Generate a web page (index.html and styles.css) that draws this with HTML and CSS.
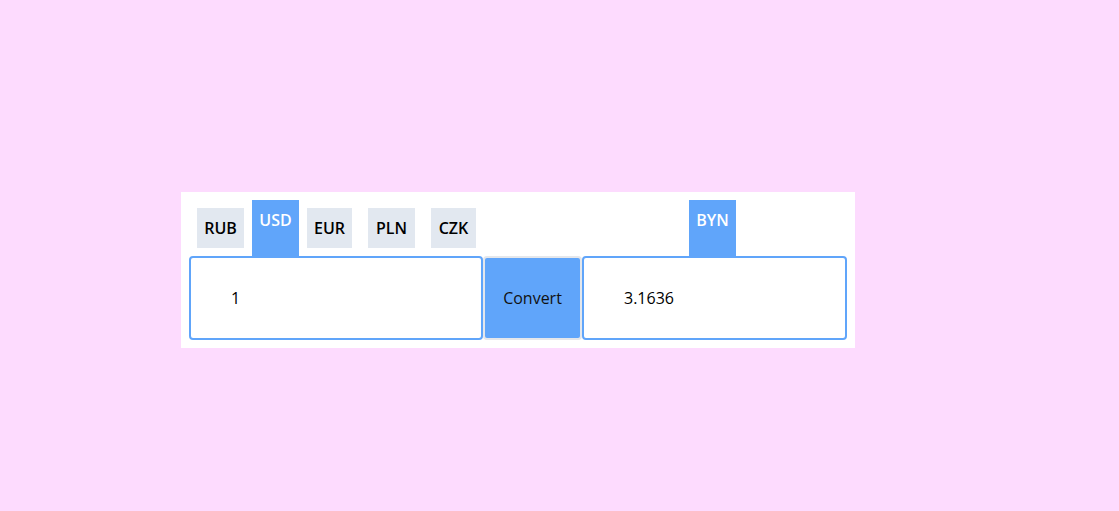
FILE: index.html
```html
<!DOCTYPE html>
<html lang="en">
<head>
<meta charset="utf-8">
<title>Currency converter</title>
<link rel="stylesheet" href="styles.css">
</head>
<body>
<div class="app">
  <div class="block block-in">
    <ul class="tabs">
      <li class="tab">RUB</li>
      <li class="tab active">USD</li>
      <li class="tab narrow">EUR</li>
      <li class="tab wide-gap">PLN</li>
      <li class="tab narrow wide-gap">CZK</li>
    </ul>
    <input class="field" type="text" value="1">
  </div>
  <button class="convert">Convert</button>
  <div class="block block-out">
    <ul class="tabs tabs-out">
      <li class="tab active">BYN</li>
    </ul>
    <input class="field" type="text" value="3.1636">
  </div>
</div>
</body>
</html>
```

FILE: styles.css
```css
* { box-sizing: border-box; }

html, body {
  margin: 0;
  padding: 0;
  background: #fddbfe;
  font-family: "Open Sans", "Noto Sans", sans-serif;
}

body {
  padding: 192px 0 0 181px;
}

.app {
  display: inline-flex;
  align-items: flex-end;
  background: #ffffff;
  padding: 8px;
}

.block {
  display: flex;
  flex-direction: column;
}

.block-in { width: 294px; }
.block-out { width: 265px; }

.tabs {
  list-style: none;
  margin: 0;
  padding: 0 0 0 8px;
  height: 56px;
  display: flex;
  align-items: center;
  gap: 8px;
}

.tabs-out {
  padding-left: 107px;
}

.tab {
  width: 47px;
  height: 40px;
  padding-top: 10px;
  line-height: 20px;
  text-align: center;
  font-size: 16px;
  font-weight: 600;
  color: #000;
  background: #e2e8f0;
  cursor: pointer;
}

.tab.narrow {
  width: 45px;
}

.tab.wide-gap {
  margin-left: 8px;
}

.tab.active {
  width: 47px;
  height: 56px;
  background: #60a5fa;
  color: #fff;
  font-weight: 600;
}

.field {
  width: 100%;
  height: 84px;
  border: 2px solid #60a5fa;
  border-radius: 4px;
  padding: 0 0 0 40px;
  margin: 0;
  font-family: "Open Sans", "Noto Sans", sans-serif;
  font-size: 16px;
  color: #000;
  background: #fff;
  outline: none;
}

.convert {
  width: 99px;
  height: 84px;
  margin: 0;
  border: 2px solid #e5e7eb;
  border-radius: 4px;
  background: #60a5fa;
  font-family: "Open Sans", "Noto Sans", sans-serif;
  font-size: 16px;
  color: #111;
  cursor: pointer;
}
```
